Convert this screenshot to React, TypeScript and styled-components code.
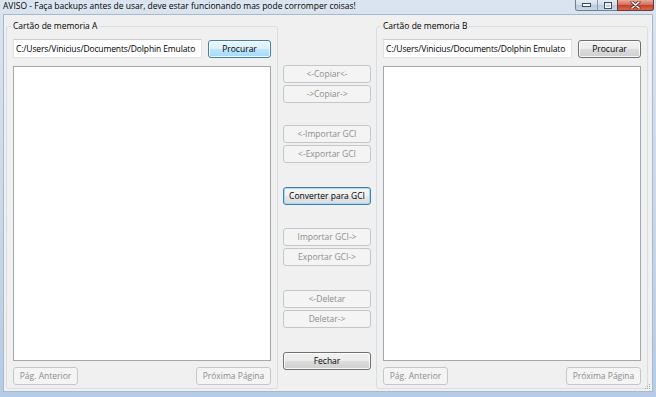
import React from 'react';
import styled, { createGlobalStyle, css } from 'styled-components';

const GlobalStyle = createGlobalStyle`
  html, body {
    margin: 0;
    padding: 0;
    overflow: hidden;
  }
  body {
    font-family: 'Open Sans', 'Noto Sans', sans-serif;
    color: #000;
  }
`;

const Window = styled.div`
  width: 656px;
  height: 397px;
  display: flex;
  flex-direction: column;
  background: linear-gradient(180deg, #d9e4f0 0%, #cbd9e9 50%, #b4cce6 100%);
`;

const TitleBar = styled.div`
  height: 14px;
  display: flex;
  align-items: flex-start;
  padding-left: 3px;
`;

const TitleText = styled.div`
  flex: 1;
  font-size: 8.5px;
  line-height: 12px;
  white-space: nowrap;
  text-shadow: 0 0 6px rgba(255, 255, 255, 0.9);
`;

const Controls = styled.div`
  display: flex;
  margin-right: 2px;
`;

const CaptionGroup = styled.div`
  display: flex;
  height: 10px;
  border: 1px solid #6f7f92;
  border-top: none;
  border-right: none;
  border-radius: 0 0 0 3px;
  overflow: hidden;
`;

const CaptionButton = styled.div<{ $w: number; $close?: boolean }>`
  width: ${(p) => p.$w}px;
  height: 10px;
  display: flex;
  align-items: center;
  justify-content: center;
  background: linear-gradient(180deg, #e4ecf5 0%, #d2deeb 45%, #b9cadd 50%, #c9d8e8 100%);
  & + & {
    border-left: 1px solid #8c9aab;
  }
  ${(p) =>
    p.$close &&
    css`
      border: 1px solid #6b3a33;
      border-top: none;
      border-radius: 0 0 3px 0;
      background: linear-gradient(180deg, #e9a99b 0%, #d7705d 45%, #c23f27 50%, #d86a4d 100%);
    `}
`;

const Client = styled.div`
  flex: 1;
  margin: 0 3px 5px 3px;
  border: 1px solid #a9b9cb;
  background: #f0f0f0;
  position: relative;
  display: grid;
  grid-template-columns: 272px 88px 272px;
  column-gap: 5px;
  padding: 5px 4px 2px 2px;
  min-height: 0;
`;

const Group = styled.fieldset`
  margin: 0;
  padding: 7px 6px 3px 6px;
  border: 1px solid #d5dfe5;
  border-radius: 3px;
  min-width: 0;
  min-height: 0;
  display: flex;
  flex-direction: column;
`;

const Legend = styled.legend`
  padding: 0 2px;
  margin-left: -2px;
  font-size: 8.5px;
  line-height: 12px;
`;

const PathRow = styled.div`
  display: flex;
  align-items: flex-end;
  gap: 6px;
  height: 19px;
`;

const PathBox = styled.div`
  flex: 1;
  height: 19px;
  box-sizing: border-box;
  border: 1px solid #dfe3e8;
  border-top-color: #c9ced4;
  background: #fff;
  font-size: 8.5px;
  letter-spacing: -0.12px;
  line-height: 17px;
  padding-left: 2px;
  white-space: nowrap;
  overflow: hidden;
`;

const ListBox = styled.div`
  flex: 1;
  margin-top: 8px;
  background: #fff;
  border: 1px solid #a3a8ae;
`;

const PageRow = styled.div`
  display: flex;
  justify-content: space-between;
  margin-top: 6px;
`;

type Variant = 'normal' | 'hot' | 'default' | 'disabled';

const Button = styled.button<{ $variant?: Variant; $w?: number; $top?: number }>`
  width: ${(p) => (p.$w ? `${p.$w}px` : '100%')};
  height: 18px;
  flex: none;
  margin: ${(p) => p.$top ?? 0}px 0 0 0;
  padding: 0;
  box-sizing: border-box;
  border-radius: 3px;
  font-family: 'Open Sans', 'Noto Sans', sans-serif;
  font-size: 8.5px;
  line-height: 16px;
  color: #000;
  border: 1px solid #707070;
  box-shadow: inset 0 0 0 1px rgba(255, 255, 255, 0.85);
  background: linear-gradient(180deg, #f2f2f2 0%, #ebebeb 50%, #dddddd 50%, #cfcfcf 100%);
  ${(p) =>
    p.$variant === 'hot' &&
    css`
      border-color: #3c7fb1;
      background: linear-gradient(180deg, #eaf6fd 0%, #d9f0fc 50%, #bee6fd 50%, #a7d9f5 100%);
    `}
  ${(p) =>
    p.$variant === 'default' &&
    css`
      border-color: #3c7fb1;
      box-shadow: inset 0 0 0 1px #9fdcf5;
      background: linear-gradient(180deg, #f6f6f6 0%, #f0f0f0 50%, #e6e6e6 50%, #dcdcdc 100%);
    `}
  ${(p) =>
    p.$variant === 'disabled' &&
    css`
      border-color: #c3c7ca;
      box-shadow: none;
      background: #f4f4f4;
      color: #8d8d8d;
    `}
`;

const Middle = styled.div`
  display: flex;
  flex-direction: column;
  padding-top: 45px;
`;

const Grip = styled.svg`
  position: absolute;
  right: 1px;
  bottom: 1px;
`;

function MemCardPanel({ label, hot }: { label: string; hot?: boolean }) {
  return (
    <Group>
      <Legend>{label}</Legend>
      <PathRow>
        <PathBox>C:/Users/Vinicius/Documents/Dolphin Emulato</PathBox>
        <Button $w={63} $variant={hot ? 'hot' : 'normal'}>
          Procurar
        </Button>
      </PathRow>
      <ListBox />
      <PageRow>
        <Button $w={65} $variant="disabled">
          Pág. Anterior
        </Button>
        <Button $w={75} $variant="disabled">
          Próxima Página
        </Button>
      </PageRow>
    </Group>
  );
}

const middleButtons: { text: string; top: number; variant: Variant }[] = [
  { text: '<-Copiar<-', top: 0, variant: 'disabled' },
  { text: '->Copiar->', top: 2, variant: 'disabled' },
  { text: '<-Importar GCI', top: 22, variant: 'disabled' },
  { text: '<-Exportar GCI', top: 2, variant: 'disabled' },
  { text: 'Converter para GCI', top: 24, variant: 'default' },
  { text: 'Importar GCI->', top: 23, variant: 'disabled' },
  { text: 'Exportar GCI->', top: 2, variant: 'disabled' },
  { text: '<-Deletar', top: 24, variant: 'disabled' },
  { text: 'Deletar->', top: 2, variant: 'disabled' },
  { text: 'Fechar', top: 24, variant: 'normal' },
];

export default function App() {
  return (
    <>
      <GlobalStyle />
      <Window>
        <TitleBar>
          <TitleText>AVISO - Faça backups antes de usar, deve estar funcionando mas pode corromper coisas!</TitleText>
          <Controls>
            <CaptionGroup>
              <CaptionButton $w={21}>
                <svg width="9" height="4" viewBox="0 0 9 4">
                  <rect x="0.5" y="0.5" width="8" height="3" fill="#fff" stroke="#3d4a5a" />
                </svg>
              </CaptionButton>
              <CaptionButton $w={19}>
                <svg width="8" height="7" viewBox="0 0 8 7">
                  <rect x="0.5" y="0.5" width="7" height="6" fill="none" stroke="#3d4a5a" />
                  <rect x="1.5" y="2" width="5" height="3.5" fill="none" stroke="#fff" />
                </svg>
              </CaptionButton>
            </CaptionGroup>
            <CaptionButton $w={35} $close>
              <svg width="11" height="8" viewBox="0 0 11 8">
                <path d="M2 1 L9 7 M9 1 L2 7" stroke="#5a2a22" strokeWidth="3" strokeLinecap="round" />
                <path d="M2 1 L9 7 M9 1 L2 7" stroke="#fff" strokeWidth="1.6" strokeLinecap="round" />
              </svg>
            </CaptionButton>
          </Controls>
        </TitleBar>
        <Client>
          <MemCardPanel label="Cartão de memoria A" hot />
          <Middle>
            {middleButtons.map((b) => (
              <Button key={b.text} $top={b.top} $variant={b.variant}>
                {b.text}
              </Button>
            ))}
          </Middle>
          <MemCardPanel label="Cartão de memoria B" />
          <Grip width="8" height="8" viewBox="0 0 8 8">
            {[
              [6, 2],
              [4, 4],
              [6, 4],
              [2, 6],
              [4, 6],
              [6, 6],
            ].map(([x, y]) => (
              <rect key={`${x}-${y}`} x={x} y={y} width="1" height="1" fill="#a0a8b2" />
            ))}
          </Grip>
        </Client>
      </Window>
    </>
  );
}
